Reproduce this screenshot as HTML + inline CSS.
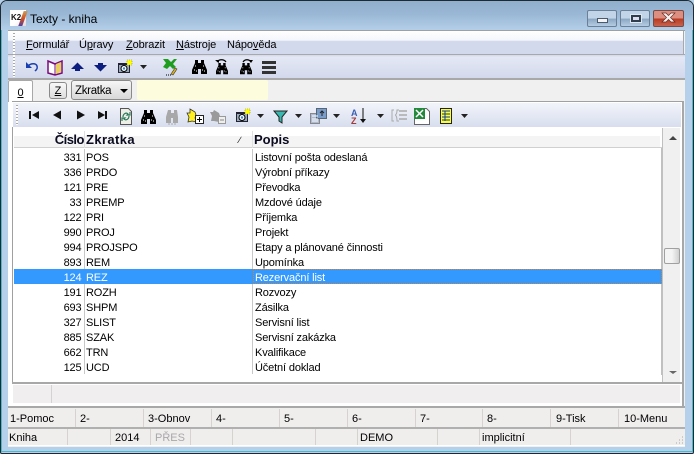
<!DOCTYPE html>
<html><head><meta charset="utf-8"><style>
html,body{margin:0;padding:0;background:#fff}
#w{position:relative;width:694px;height:454px;overflow:hidden;font:11px/15px "Liberation Sans",sans-serif;color:#000;background:#b4d0ea}
#w div,#w span.a{position:absolute;white-space:nowrap}
u{text-decoration:underline}
.r{left:0;width:640px;height:15px;letter-spacing:-.14px}
.n{left:40px;width:41.5px;text-align:right;top:2px}
.k{left:86px;top:2px}
.p{left:255px;top:2px}
.vl{width:1px;background:#c8c8c8}
.fk{top:409px;height:18px;line-height:20px;border-right:1px solid #d6d2d0}
.st{top:429px;height:16px;line-height:18px;border-right:1px solid #d6d2d0}
.m{top:38px;line-height:15px;font-size:11px;letter-spacing:-.1px}
</style></head><body><div id="w">
<!-- frame -->
<div style="left:0;top:0;width:694px;height:454px;box-sizing:border-box;border:1px solid #1e2a33;border-radius:7px 7px 2px 2px;background:#b4d0ea"></div>
<div style="left:1px;top:1px;width:692px;height:30px;border-radius:6px 6px 0 0;background:linear-gradient(#90afcc,#9ab8d5 45%,#b5d0ea)"></div>
<div style="left:692px;top:30px;width:1px;height:422px;background:#49b8c8"></div>
<div style="left:1px;top:30px;width:1px;height:422px;background:#4fb8c8"></div>
<div style="left:1px;top:451px;width:692px;height:1px;background:#4fb8c8"></div>
<div style="left:10px;top:10px;width:16px;height:16px;background:linear-gradient(135deg,#fff 55%,#e8d8d8)"></div>
<div style="left:11px;top:13px;font:bold 8px/9px 'Liberation Sans',sans-serif;color:#111">K2</div>
<div style="left:21px;top:11px;width:4px;height:15px;background:linear-gradient(#c8a060,#d05020 50%,#5040a0);transform:skewX(-20deg)"></div>
<div style="left:30px;top:11px;font-size:12px;line-height:16px;color:#000">Texty - kniha</div>
<!-- caption buttons -->
<div style="left:587px;top:10px;width:28px;height:15px;border:1px solid #6b7f96;border-radius:2px;background:linear-gradient(#c2d5e8 50%,#8aa5c1 52%,#b5cde3)"></div>
<div style="left:597px;top:18px;width:9px;height:3px;background:#f4f4f4;border:1px solid #4a5a6c"></div>
<div style="left:620px;top:10px;width:28px;height:15px;border:1px solid #6b7f96;border-radius:2px;background:linear-gradient(#c2d5e8 50%,#8aa5c1 52%,#b5cde3)"></div>
<div style="left:631px;top:15px;width:6px;height:3px;background:#dde;border:2px solid #2f3d4c;outline:1px solid #dfe8f0"></div>
<div style="left:653px;top:10px;width:29px;height:15px;border:1px solid #7b4a44;border-radius:2px;background:linear-gradient(#dc8f80 48%,#b83a22 52%,#c8634e)"></div>
<!-- client -->
<div style="left:8px;top:30px;width:677px;height:416px;background:#f0f0f0;border-top:1px solid #a0a0a0"></div>
<div style="left:8px;top:31px;width:675px;height:23px;border-right:1px solid #a8a8a8;background:linear-gradient(#fff,#f4f6fb 40%,#d3d9ec 45%,#d3d9ec)"></div>
<div style="left:8px;top:54px;width:677px;height:1px;background:#a8a8a8"></div>
<div style="left:8px;top:55px;width:677px;height:23px;background:linear-gradient(#d3d9ec,#e4e8f5 10%,#d3d9ec);border-bottom:2px solid #a8a8a8"></div>
<div style="left:13px;top:33px;width:2px;height:44px;background:repeating-linear-gradient(#a8a8a8 0 1px,#fff 1px 3px)"></div>
<div class="m" style="left:26px"><u>F</u>ormulář</div>
<div class="m" style="left:79px">Ú<u>p</u>ravy</div>
<div class="m" style="left:126px"><u>Z</u>obrazit</div>
<div class="m" style="left:176px"><u>N</u>ástroje</div>
<div class="m" style="left:227px">Nápo<u>v</u>ěda</div>
<!-- tab row -->
<div style="left:8px;top:80px;width:23px;height:22px;background:#fff;border:1px solid #a8a8a8;border-bottom:none;border-radius:2px 2px 0 0;text-align:center;line-height:24px"><u>0</u></div>
<div style="left:49px;top:82px;width:16px;height:15px;border:1px solid #8a8a8a;border-radius:3px;background:linear-gradient(#f8f8f8,#ddd);text-align:center;line-height:16px"><u>Z</u></div>
<div style="left:71px;top:80px;width:56px;height:18px;border:1px solid #8a8a8a;border-radius:3px;background:linear-gradient(#f6f6f6,#d8d8d8);line-height:20px;padding-left:3px;font-size:11.500px;letter-spacing:-.3px">Zkratka</div>
<div style="left:120px;top:89px;width:0;height:0;border:4px solid transparent;border-top:4px solid #000;border-bottom:0"></div>
<div style="left:137px;top:80px;width:131px;height:20px;background:#fdfdde;border-radius:2px"></div>
<!-- inner panel -->
<div style="left:12px;top:101px;width:670px;height:305px;background:#fff;border-top:1px solid #a0a0a0;border-right:2px solid #a8a8a8"></div>
<div style="left:8px;top:102px;width:4px;height:304px;background:#fff"></div>
<div style="left:13px;top:103px;width:668px;height:24px;background:linear-gradient(#f2f4fa,#d8deef)"></div>
<div style="left:16px;top:105px;width:2px;height:20px;background:repeating-linear-gradient(#a8a8a8 0 1px,#fff 1px 3px)"></div>
<div style="left:12px;top:127px;width:1px;height:256px;background:#a0a0a0"></div>
<!-- header -->
<div style="left:14px;top:136px;width:646px;height:11px;background:#f4f4f4"></div>
<div style="left:14px;top:147px;width:648px;height:1px;background:#d0d0d0"></div>
<div style="left:40px;top:131px;width:44px;text-align:right;font:bold 13px/17px 'Liberation Sans',sans-serif;color:#0a0a20;letter-spacing:-.5px">Číslo</div>
<div style="left:86px;top:131px;font:bold 13px/17px 'Liberation Sans',sans-serif;color:#0a0a20;letter-spacing:.4px">Zkratka</div>
<div style="left:254px;top:131px;font:bold 13px/17px 'Liberation Sans',sans-serif;color:#0a0a20">Popis</div>
<div style="left:239px;top:134px;font-size:9px;line-height:12px">∕</div>
<div class="vl" style="left:84px;top:131px;height:17px;background:#e0e0e0"></div>
<div class="vl" style="left:252px;top:131px;height:17px;background:#e0e0e0"></div>
<div class="vl" style="left:661px;top:148px;height:227px;background:#c0c0c0"></div>
<!-- rows -->
<div style="left:14px;top:269px;width:648px;height:15px;background:#3399ff"></div>
<div style="left:253px;top:269px;width:407px;height:13px;border:1px dotted #d8802a"></div>
<div class="vl" style="left:84px;top:149px;height:120px"></div>
<div class="vl" style="left:84px;top:284px;height:90px"></div>
<div class="vl" style="left:252px;top:149px;height:120px"></div>
<div class="vl" style="left:252px;top:284px;height:90px"></div>
<div class="r" style="top:149px"><div class="n">331</div><div class="k">POS</div><div class="p">Listovní pošta odeslaná</div></div>
<div class="r" style="top:164px"><div class="n">336</div><div class="k">PRDO</div><div class="p">Výrobní příkazy</div></div>
<div class="r" style="top:179px"><div class="n">121</div><div class="k">PRE</div><div class="p">Převodka</div></div>
<div class="r" style="top:194px"><div class="n">33</div><div class="k">PREMP</div><div class="p">Mzdové údaje</div></div>
<div class="r" style="top:209px"><div class="n">122</div><div class="k">PRI</div><div class="p">Příjemka</div></div>
<div class="r" style="top:224px"><div class="n">990</div><div class="k">PROJ</div><div class="p">Projekt</div></div>
<div class="r" style="top:239px"><div class="n">994</div><div class="k">PROJSPO</div><div class="p">Etapy a plánované činnosti</div></div>
<div class="r" style="top:254px"><div class="n">893</div><div class="k">REM</div><div class="p">Upomínka</div></div>
<div class="r" style="top:269px;color:#fff"><div class="n">124</div><div class="k">REZ</div><div class="p">Rezervační list</div></div>
<div class="r" style="top:284px"><div class="n">191</div><div class="k">ROZH</div><div class="p">Rozvozy</div></div>
<div class="r" style="top:299px"><div class="n">693</div><div class="k">SHPM</div><div class="p">Zásilka</div></div>
<div class="r" style="top:314px"><div class="n">327</div><div class="k">SLIST</div><div class="p">Servisní list</div></div>
<div class="r" style="top:329px"><div class="n">885</div><div class="k">SZAK</div><div class="p">Servisní zakázka</div></div>
<div class="r" style="top:344px"><div class="n">662</div><div class="k">TRN</div><div class="p">Kvalifikace</div></div>
<div class="r" style="top:359px"><div class="n">125</div><div class="k">UCD</div><div class="p">Účetní doklad</div></div>
<!-- scrollbar -->
<div style="left:662px;top:128px;width:1px;height:254px;background:#c0c0c0"></div>
<div style="left:663px;top:128px;width:17px;height:254px;background:#f0f0f0"></div>
<div style="left:664px;top:248px;width:14px;height:14px;border:1px solid #a0a0a0;border-radius:2px;background:linear-gradient(90deg,#f4f4f4 50%,#d0d0d0)"></div>
<div style="left:669px;top:136px;width:0;height:0;border:4px solid transparent;border-bottom:4px solid #444;border-top:0"></div>
<div style="left:669px;top:371px;width:0;height:0;border:4px solid transparent;border-top:3px solid #666;border-bottom:0"></div>
<!-- grid bottom / info bar -->
<div style="left:12px;top:382px;width:670px;height:2px;background:#a8a8a8"></div>
<div style="left:13px;top:385px;width:667px;height:18px;background:#f0eeee"></div>
<div style="left:51px;top:385px;width:1px;height:18px;background:#d4d2d2"></div>
<div style="left:8px;top:406px;width:677px;height:2px;background:#a8a8a8"></div>
<!-- function keys -->
<div style="left:8px;top:408px;width:677px;height:38px;background:#f0eded"></div>
<div class="fk" style="left:8px;width:68px;padding-left:2px;box-sizing:border-box;">1-Pomoc</div>
<div class="fk" style="left:77px;width:67px;padding-left:3px;box-sizing:border-box">2-</div>
<div class="fk" style="left:144px;width:68px;padding-left:4px;box-sizing:border-box">3-Obnov</div>
<div class="fk" style="left:213px;width:67px;padding-left:3px;box-sizing:border-box">4-</div>
<div class="fk" style="left:280px;width:68px;padding-left:4px;box-sizing:border-box">5-</div>
<div class="fk" style="left:349px;width:67px;padding-left:3px;box-sizing:border-box">6-</div>
<div class="fk" style="left:416px;width:67px;padding-left:4px;box-sizing:border-box">7-</div>
<div class="fk" style="left:484px;width:67px;padding-left:3px;box-sizing:border-box">8-</div>
<div class="fk" style="left:552px;width:67px;padding-left:4px;box-sizing:border-box">9-Tisk</div>
<div class="fk" style="left:620px;width:65px;padding-left:4px;box-sizing:border-box;border:0">10-Menu</div>
<div style="left:8px;top:427px;width:677px;height:2px;background:#b0b0b0"></div>
<div class="st" style="left:8px;width:60px;padding-left:1px;box-sizing:border-box">Kniha</div>
<div class="st" style="left:69px;width:41px"></div>
<div class="st" style="left:111px;width:40px;padding-left:4px;box-sizing:border-box">2014</div>
<div class="st" style="left:152px;width:39px;padding-left:3px;box-sizing:border-box;color:#a8a8a8">PŘES</div>
<div class="st" style="left:192px;width:40px"></div>
<div class="st" style="left:233px;width:82px"></div>
<div class="st" style="left:316px;width:41px"></div>
<div class="st" style="left:358px;width:80px;padding-left:2px;box-sizing:border-box">DEMO</div>
<div class="st" style="left:439px;width:40px"></div>
<div class="st" style="left:480px;width:91px;padding-left:2px;box-sizing:border-box">implicitní</div>
<div style="left:8px;top:445px;width:677px;height:1px;background:#fff"></div>
<!-- icons -->
<svg style="position:absolute;left:0;top:0" width="694" height="454" viewBox="0 0 694 454">
<defs>
<g id="bin"><path d="M3 0h3v3h3V0h3v3l3 7v4H9V9H6v5H0v-4l3-7z" fill="#000"/><path d="M2 10h1M4 11h1M10 10h1M12 11h1M3 6h1M11 6h1" stroke="#fff" stroke-width="1"/></g>
<g id="cam"><rect x="0" y="3" width="12" height="10" fill="#223"/><rect x="1" y="5" width="10" height="7" fill="#9ab"/><circle cx="6" cy="8.500" r="3" fill="#fff" stroke="#000"/><circle cx="6" cy="8.500" r="1.200" fill="#38c"/><rect x="9" y="0" width="5" height="5" fill="#ff0" stroke="#883" stroke-width=".6" stroke-dasharray="1 1"/></g>
<path id="dd" d="M0 0h7L3.500 4z" fill="#222"/>
</defs>
<!-- close X -->
<path d="M662 13h4l2.500 2.500L671 13h4l-4.500 4.500L675 22h-4l-2.500-2.500L666 22h-4l4.500-4.500z" fill="#f4f0f0" stroke="#6a2a22" stroke-width=".7"/>
<!-- toolbar 1 -->
<path d="M28 66c3-3 8-3 9 0s-1 4-2 5" fill="none" stroke="#1a3fb0" stroke-width="1.500"/><path d="M26 62v6h6z" fill="#1a3fb0"/>
<path d="M48 61l7 3 7-3v12l-7 2-7-2z" fill="#fff" stroke="#7a0a7a" stroke-width="1.500"/><path d="M55 63v12" stroke="#7a0a7a"/><path d="M56 64l5-2v10l-5 2z" fill="#e8d060"/>
<path d="M71 69l6.500-6.500L84 69h-4v2h-5v-2z" fill="#0c1f80"/>
<path d="M94 65l0 0h4v-2h5v2h4l-6.500 6.500z" fill="#0c1f80"/>
<use href="#cam" x="118" y="60"/>
<use href="#dd" x="140" y="65"/>
<path d="M163 59h5l3 3 3-3h3l-4 5 3 3-3 2-3-3-3 3-4-2 3-4z" fill="#1f9d1f"/><path d="M171 74l4-6 2 1-4 6z" fill="#d8b020" stroke="#333" stroke-width=".6"/><path d="M166 75h1M168 75h1M170 75h1" stroke="#000"/>
<use href="#bin" x="192" y="60"/>
<g transform="translate(216,63) scale(.8,.8)"><use href="#bin"/></g><path d="M217 62c2-3 7-3 9 0" fill="none" stroke="#000" stroke-width="1.200"/><path d="M215 60h4v3z" fill="#000"/>
<g transform="translate(240,63) scale(.8,.8)"><use href="#bin"/></g><path d="M243 62c2-3 6-3 8 0" fill="none" stroke="#000" stroke-width="1.200"/><path d="M253 60h-4l2 3z" fill="#000"/>
<path d="M262 61h14v3h-14zM262 66h14v3h-14zM262 71h14v3h-14z" fill="#333"/>
<!-- toolbar 2 -->
<path d="M29 111h2v8h-2zM32 115l7-4v8z" fill="#111"/>
<path d="M53 115l8-4.500v9z" fill="#111"/>
<path d="M77 110.500l8 4.500-8 4.500z" fill="#111"/>
<path d="M98 111l7 4v-4h2v8h-2v-4l-7 4z" fill="#111"/>
<path d="M120.500 108.500h8l3 3v13h-11z" fill="#eef0e8" stroke="#555"/><path d="M123 117c0-3 3-5 5-3l-1 1h3v-3M129 116c0 3-3 5-5 3l1-1h-3v3" fill="none" stroke="#2a7a5a" stroke-width="1.200"/>
<use href="#bin" x="141" y="110"/>
<path d="M168 110h3v3h3v-3h3l1 7v6h-5v-5h-2v5h-5v-6z" fill="#a8a8a8"/><path d="M168 124h2M171 124h2M174 124h2" stroke="#aaa"/>
<path d="M190 109l5 3 1 3-1 3 2 4-5-1-4 1 1-5-2-4 3 0z" fill="#ffee20" stroke="#333" stroke-width=".8"/><rect x="195.500" y="115.500" width="8" height="8" fill="#fff" stroke="#222"/><path d="M197 119.500h5M199.500 117v5" stroke="#000"/>
<path d="M214 110l5 3 1 3-2 3 1 3-5-1-3 0 1-5-2-4 3 0z" fill="#9a9a9a"/><rect x="218.500" y="116.500" width="7" height="7" fill="#eee" stroke="#999"/><path d="M220 120h4" stroke="#888"/>
<use href="#cam" x="236" y="109"/>
<use href="#dd" x="257" y="114"/>
<path d="M274 111h13l-5 6v6l-3-2v-4z" fill="#3ab8b0" stroke="#222" stroke-width="1"/>
<use href="#dd" x="295" y="114"/>
<rect x="310.500" y="113.500" width="9" height="10" fill="#aebbd4" stroke="#888"/><rect x="316.500" y="108.500" width="10" height="10" fill="#7a9cc8" stroke="#567"/><path d="M322 111v5M320 113l2-2 2 2" stroke="#222" fill="none"/><path d="M312 116h6M312 119h6M312 121h6" stroke="#fff"/>
<use href="#dd" x="333" y="114"/>
<text x="351" y="116" font-family="Liberation Sans" font-weight="bold" font-size="9" fill="#3a5fb0">A</text>
<text x="351" y="124" font-family="Liberation Sans" font-weight="bold" font-size="9" fill="#a03a3a">Z</text>
<path d="M363 108v13" stroke="#111"/><path d="M360 119h6l-3 4z" fill="#111"/>
<use href="#dd" x="377" y="114"/>
<path d="M394 110h-2v11h2M399 110h-2c0 5-2 5-2 5s2 0 2 6h2" fill="none" stroke="#aaa"/><path d="M399 111h8M399 115h8M399 119h8" stroke="#aaa" stroke-width="1.500"/>
<path d="M414.500 108.500h12l3 3v13h-15z" fill="#fff" stroke="#666"/><rect x="414" y="108" width="11" height="11" fill="#228a3a"/><path d="M416 110l7 7M423 110l-7 7" stroke="#fff" stroke-width="1.500"/>
<rect x="440.500" y="108.500" width="11" height="15" fill="#ffff30" stroke="#222"/><path d="M442 111h8M442 114h8M442 117h8M442 120h8M445 111v10" stroke="#123b9b"/>
<use href="#dd" x="461" y="114"/>
<!-- resize grip -->
<path d="M682 443h1M679 443h1M676 443h1M682 440h1M679 440h1M682 437h1" stroke="#a8a8a8"/>
</svg>
</div></body></html>
